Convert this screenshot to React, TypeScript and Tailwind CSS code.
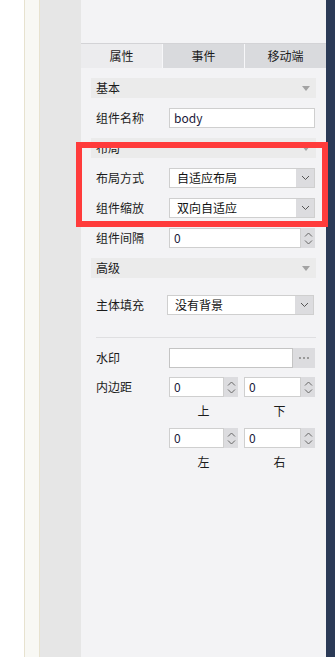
import React from "react";

const Caret = () => (
  <svg width="8" height="5" viewBox="0 0 8 5">
    <polygon points="0,0 8,0 4,5" fill="#a3a3a3" />
  </svg>
);

const ChevDown = () => (
  <svg width="9" height="6" viewBox="0 0 9 6">
    <polyline points="1,1 4.5,4.5 8,1" fill="none" stroke="#555" strokeWidth="1" />
  </svg>
);

const Spinner = () => (
  <div className="w-[14px] h-full bg-[#dcdcdf] flex flex-col items-center justify-center gap-[3px]">
    <svg width="9" height="5" viewBox="0 0 9 5">
      <polyline points="1,4.5 4.5,1 8,4.5" fill="none" stroke="#666" strokeWidth="1" />
    </svg>
    <svg width="9" height="5" viewBox="0 0 9 5">
      <polyline points="1,0.5 4.5,4 8,0.5" fill="none" stroke="#666" strokeWidth="1" />
    </svg>
  </div>
);

const Header = ({ title, className = "" }: { title: string; className?: string }) => (
  <div className={`h-5 bg-[#ebebeb] flex items-center justify-between pl-[5px] pr-[6px] ${className}`}>
    <span className="leading-5">{title}</span>
    <Caret />
  </div>
);

const Select = ({ value, w = "w-[146px]" }: { value: string; w?: string }) => (
  <div className={`${w} h-5 flex border border-[#cfcfcf] bg-white`}>
    <div className="flex-1 pl-[7px] leading-[18px] text-[#111]">{value}</div>
    <div className="w-[18px] h-full bg-[#dcdcdf] flex items-center justify-center">
      <ChevDown />
    </div>
  </div>
);

const NumBox = ({ w }: { w: string }) => (
  <div className={`${w} h-5 flex`}>
    <div className="flex-1 h-full border border-[#cfcfcf] bg-white pl-[4px] leading-[18px] text-[#1a1a3a]">0</div>
    <Spinner />
  </div>
);

export default function App() {
  return (
    <div className="relative w-[335px] h-[657px] flex overflow-hidden bg-white text-[12px] text-[#1b1b1b] font-[family-name:'Noto_Sans_CJK_SC','Liberation_Sans',sans-serif]">
      <div className="w-[24px] bg-white" />
      <div className="w-[16px] bg-[#f8f8f4] border-l border-r border-[#e7e2cf]" />
      <div className="w-[41px] bg-[#e6e6e6]" />
      <div className="w-[245px] bg-[#f3f3f5] flex flex-col">
        <div className="h-[43px]" />
        <div className="border-t border-[#d3d3d6] flex h-[25px]">
          <div className="w-[81px] bg-[#ececee] flex items-center justify-center">属性</div>
          <div className="w-px bg-[#f7f7f9]" />
          <div className="w-[81px] bg-[#d9dadd] flex items-center justify-center">事件</div>
          <div className="w-px bg-[#f7f7f9]" />
          <div className="w-[81px] bg-[#d9dadd] flex items-center justify-center">移动端</div>
        </div>
        <div className="px-[10px] flex flex-col">
          <Header title="基本" className="mt-[10px]" />
          <div className="mt-[10px] h-5 flex items-center">
            <div className="w-[78px] pl-[5px]">组件名称</div>
            <div className="w-[146px] h-5 border border-[#cfcfcf] bg-white pl-[4px] leading-[18px] text-[#1a1a3a]">body</div>
          </div>
          <Header title="布局" className="mt-[10px]" />
          <div className="mt-[10px] h-5 flex items-center">
            <div className="w-[78px] pl-[5px]">布局方式</div>
            <Select value="自适应布局" />
          </div>
          <div className="mt-[10px] h-5 flex items-center">
            <div className="w-[78px] pl-[5px]">组件缩放</div>
            <Select value="双向自适应" />
          </div>
          <div className="mt-[10px] h-5 flex items-center">
            <div className="w-[78px] pl-[5px]">组件间隔</div>
            <NumBox w="w-[146px]" />
          </div>
          <Header title="高级" className="mt-[10px]" />
          <div className="mt-[17px] h-5 flex items-center">
            <div className="w-[76px] pl-[5px]">主体填充</div>
            <Select value="没有背景" w="w-[147px]" />
          </div>
          <div className="mt-[22px] ml-[5px] h-px bg-[#dfdfe1]" />
          <div className="mt-[10px] h-5 flex items-center">
            <div className="w-[78px] pl-[5px]">水印</div>
            <div className="w-[146px] h-5 flex">
              <div className="flex-1 border border-[#c4c4c4] bg-white" />
              <div className="w-[22px] bg-[#dcdcdf] flex items-center justify-center gap-[2px]">
                <div className="w-[2px] h-[2px] bg-[#9a9a9a]" />
                <div className="w-[2px] h-[2px] bg-[#9a9a9a]" />
                <div className="w-[2px] h-[2px] bg-[#9a9a9a]" />
              </div>
            </div>
          </div>
          <div className="mt-[9px] flex">
            <div className="w-[78px] pl-[5px] h-5 leading-5">内边距</div>
            <div className="flex flex-col">
              <div className="flex gap-[6px]">
                <NumBox w="w-[69px]" />
                <NumBox w="w-[71px]" />
              </div>
              <div className="flex gap-[6px] mt-[6px] h-4 leading-4">
                <div className="w-[69px] text-center">上</div>
                <div className="w-[71px] text-center">下</div>
              </div>
              <div className="flex gap-[6px] mt-[9px]">
                <NumBox w="w-[69px]" />
                <NumBox w="w-[71px]" />
              </div>
              <div className="flex gap-[6px] mt-[6px] h-4 leading-4">
                <div className="w-[69px] text-center">左</div>
                <div className="w-[71px] text-center">右</div>
              </div>
            </div>
          </div>
        </div>
      </div>
      <div className="flex-1 bg-[#2b3a56]" />
      <div className="absolute left-[76px] top-[142px] w-[252px] h-[85px] border-[6px] border-[#ff3b3b]" />
    </div>
  );
}
